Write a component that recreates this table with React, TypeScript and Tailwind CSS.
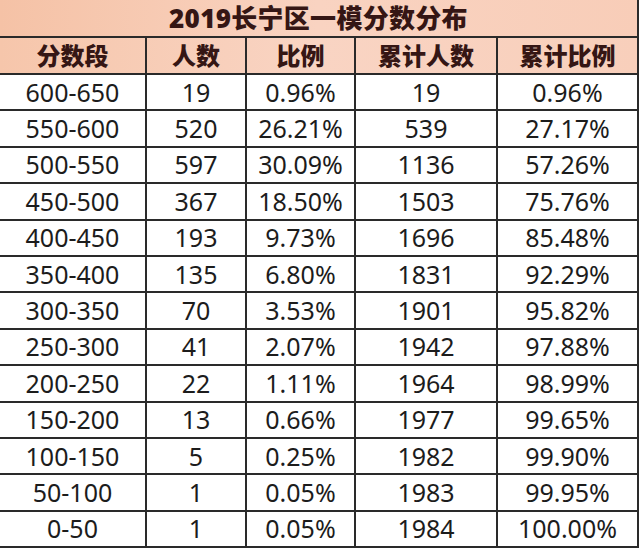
const columns = ["分数段", "人数", "比例", "累计人数", "累计比例"];

const rows = [
  ["600-650", "19", "0.96%", "19", "0.96%"],
  ["550-600", "520", "26.21%", "539", "27.17%"],
  ["500-550", "597", "30.09%", "1136", "57.26%"],
  ["450-500", "367", "18.50%", "1503", "75.76%"],
  ["400-450", "193", "9.73%", "1696", "85.48%"],
  ["350-400", "135", "6.80%", "1831", "92.29%"],
  ["300-350", "70", "3.53%", "1901", "95.82%"],
  ["250-300", "41", "2.07%", "1942", "97.88%"],
  ["200-250", "22", "1.11%", "1964", "98.99%"],
  ["150-200", "13", "0.66%", "1977", "99.65%"],
  ["100-150", "5", "0.25%", "1982", "99.90%"],
  ["50-100", "1", "0.05%", "1983", "99.95%"],
  ["0-50", "1", "0.05%", "1984", "100.00%"],
];

const widths = ["w-[147px]", "w-[100px]", "w-[109px]", "w-[142px]", "flex-1"];

export default function App() {
  return (
    <div
      className="w-[640px] h-[556px] bg-white"
      style={{ fontFamily: '"Noto Sans", "Noto Sans CJK SC", sans-serif' }}
    >
      <div className="w-[639px] border-r-2 border-[#2a2a2a]">
        <div className="h-[38px] flex items-center justify-center border-b-2 border-[#2a2a2a] bg-[linear-gradient(90deg,#f5c2a6_0%,#f9d3c1_50%,#f8cdb8_100%)]">
          <span className="text-[26px] font-black text-[#351614] leading-none tracking-[0.3px]">
            2019长宁区一模分数分布
          </span>
        </div>
        <div className="h-[37px] flex border-b-2 border-[#2a2a2a] bg-[linear-gradient(90deg,#f6c6ab_0%,#f9d4c3_50%,#f8cfbb_100%)]">
          {columns.map((c, i) => (
            <div
              key={c}
              className={`${widths[i]} flex items-center justify-center text-[24px] font-black text-[#351614] leading-none ${i < 4 ? "border-r-2 border-[#2a2a2a]" : ""}`}
            >
              {c}
            </div>
          ))}
        </div>
        {rows.map((r) => (
          <div key={r[0]} className="h-[36.4px] flex border-b-2 border-[#2a2a2a]">
            {r.map((v, i) => (
              <div
                key={i}
                className={`${widths[i]} flex items-center justify-center text-[25px] text-[#1c1c1c] leading-none ${i < 4 ? "border-r-2 border-[#2a2a2a]" : ""}`}
              >
                {v}
              </div>
            ))}
          </div>
        ))}
      </div>
    </div>
  );
}
